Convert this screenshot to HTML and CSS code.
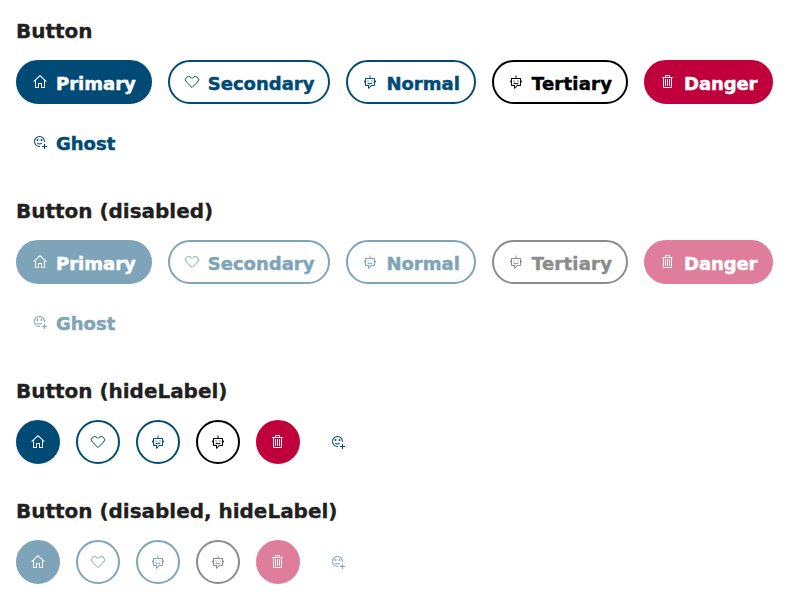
FILE: index.html
```html
<!DOCTYPE html>
<html lang="en">
<head>
<meta charset="utf-8">
<title>Button</title>
<link rel="stylesheet" href="styles.css">
</head>
<body>
<svg class="sprite" aria-hidden="true">
<symbol id="home" viewBox="0 0 16 16"><path fill-rule="evenodd" d="M8.36 1.37l6.36 5.8-.71.71L13 6.964v6.526l-.5.5h-3l-.5-.5v-3.5H7v3.5l-.5.5h-3l-.5-.5V6.972L2 7.88l-.71-.71 6.35-5.8h.72zM4 6.063v6.927h2v-3.5l.5-.5h3l.5.5v3.5h2V6.057L8 2.43 4 6.063z"/></symbol>
<symbol id="heart" viewBox="0 0 16 16"><path fill="none" stroke="currentColor" d="M8 13.55L2.42 7.97a3.13 3.13 0 0 1 0-4.52 3.25 3.25 0 0 1 4.58 0l1 1 1-1a3.25 3.25 0 0 1 4.58 0 3.13 3.13 0 0 1 0 4.52z"/></symbol>
<symbol id="robot" viewBox="0 0 16 16"><path fill-rule="evenodd" d="M8.48 4h4l.5.5v2.03h.52l.5.5V8l-.5.5h-.52v3l-.5.5H9.36l-2.5 2.76L6 14.4V12H3.5l-.5-.64V8.5h-.5L2 8v-.97l.5-.5H3V4.36L3.53 4h4V1.5h.95V4zM12 8V5H4v5.86l2.5.14H7v2.19l1.8-2.04.35-.15H12V8zm-2.12.51a2.71 2.71 0 0 1-1.37.74v-.01a2.71 2.71 0 0 1-2.42-.74l-.7.71c.34.34.745.608 1.19.79.45.188.932.286 1.42.29a3.7 3.7 0 0 0 2.58-1.07l-.7-.71zM6.49 6.5h-1v1h1v-1zm3 0h1v1h-1v-1z"/></symbol>
<symbol id="trash" viewBox="0 0 16 16"><path fill-rule="evenodd" d="M10 3h3v1h-1v9l-1 1H4l-1-1V4H2V3h3V2a1 1 0 0 1 1-1h3a1 1 0 0 1 1 1v1zM9 2H6v1h3V2zM4 13h7V4H4v9zm2-8H5v7h1V5zm1 0h1v7H7V5zm2 0h1v7H9V5z"/></symbol>
<symbol id="smile" viewBox="0 0 16 16"><path d="M12 7.5c0 .169-.01.336-.027.5h1.005A5.5 5.5 0 1 0 8 12.978v-1.005A4.5 4.5 0 1 1 12 7.5zM5.5 7a1 1 0 1 0 0-2 1 1 0 0 0 0 2zM9.5 7a1 1 0 1 0 0-2 1 1 0 0 0 0 2zM7.5 9.5c.712 0 1.355-.298 1.81-.776l.707.708A3.49 3.49 0 0 1 7.5 10.5a3.49 3.49 0 0 1-2.555-1.108l.707-.708A2.494 2.494 0 0 0 7.5 9.5zM12 10h1v2h2v1h-2v2h-1v-2h-2v-1h2z"/></symbol>
</svg>
<main class="page">
<section class="group">
<h2 class="title">Button</h2>
<div class="row">
<button class="btn primary"><svg class="icon"><use href="#home"/></svg><span class="label">Primary</span></button>
<button class="btn secondary"><svg class="icon"><use href="#heart"/></svg><span class="label">Secondary</span></button>
<button class="btn normal"><svg class="icon"><use href="#robot"/></svg><span class="label">Normal</span></button>
<button class="btn tertiary"><svg class="icon"><use href="#robot"/></svg><span class="label">Tertiary</span></button>
<button class="btn danger"><svg class="icon"><use href="#trash"/></svg><span class="label">Danger</span></button>
<button class="btn ghost"><svg class="icon"><use href="#smile"/></svg><span class="label">Ghost</span></button>
</div>
</section>
<section class="group">
<h2 class="title">Button (disabled)</h2>
<div class="row">
<button class="btn primary" disabled><svg class="icon"><use href="#home"/></svg><span class="label">Primary</span></button>
<button class="btn secondary" disabled><svg class="icon"><use href="#heart"/></svg><span class="label">Secondary</span></button>
<button class="btn normal" disabled><svg class="icon"><use href="#robot"/></svg><span class="label">Normal</span></button>
<button class="btn tertiary" disabled><svg class="icon"><use href="#robot"/></svg><span class="label">Tertiary</span></button>
<button class="btn danger" disabled><svg class="icon"><use href="#trash"/></svg><span class="label">Danger</span></button>
<button class="btn ghost" disabled><svg class="icon"><use href="#smile"/></svg><span class="label">Ghost</span></button>
</div>
</section>
<section class="group">
<h2 class="title">Button (hideLabel)</h2>
<div class="row">
<button class="btn round primary"><svg class="icon"><use href="#home"/></svg></button>
<button class="btn round secondary"><svg class="icon"><use href="#heart"/></svg></button>
<button class="btn round normal"><svg class="icon"><use href="#robot"/></svg></button>
<button class="btn round tertiary"><svg class="icon"><use href="#robot"/></svg></button>
<button class="btn round danger"><svg class="icon"><use href="#trash"/></svg></button>
<button class="btn round ghost"><svg class="icon"><use href="#smile"/></svg></button>
</div>
</section>
<section class="group">
<h2 class="title">Button (disabled, hideLabel)</h2>
<div class="row">
<button class="btn round primary" disabled><svg class="icon"><use href="#home"/></svg></button>
<button class="btn round secondary" disabled><svg class="icon"><use href="#heart"/></svg></button>
<button class="btn round normal" disabled><svg class="icon"><use href="#robot"/></svg></button>
<button class="btn round tertiary" disabled><svg class="icon"><use href="#robot"/></svg></button>
<button class="btn round danger" disabled><svg class="icon"><use href="#trash"/></svg></button>
<button class="btn round ghost" disabled><svg class="icon"><use href="#smile"/></svg></button>
</div>
</section>
</main>
</body>
</html>
```
FILE: styles.css
```css
* { box-sizing: border-box; }
body { margin: 0; background: #fff; color: #202020; font-family: Verdana, "DejaVu Sans", sans-serif; }
.sprite { display: none; }
.page { display: flex; flex-direction: column; gap: 32px; padding: 16px; }
.title { margin: 0 0 15px; padding-top: 1px; font-size: 20px; line-height: 28px; font-weight: 700; -webkit-text-stroke: .3px; letter-spacing: -.02px; }
.row { display: flex; flex-wrap: wrap; gap: 16px; }
.btn {
  display: flex; align-items: center; justify-content: center; gap: 8px;
  height: 44px; padding: 0 14px; border: 2px solid #004b76; border-radius: 22px;
  background: #fff; color: #004b76; font: inherit; font-size: 18px; font-weight: 700;
}
.btn:disabled { opacity: .5; }
.label { line-height: 24px; padding-top: 4px; white-space: nowrap; -webkit-text-stroke: .5px; }
.icon { width: 16px; height: 16px; flex: none; fill: currentColor; }
.round { width: 44px; padding: 0; }
.primary { background: #004b76; color: #fff; }
.tertiary { border-color: #000; color: #000; }
.tertiary:disabled { opacity: .45; }
.tertiary .label { letter-spacing: .22px; }
.danger { background: #c0003c; border-color: #c0003c; color: #fff; }
.danger .label { letter-spacing: -.1px; }
.ghost { border-color: transparent; }
```
